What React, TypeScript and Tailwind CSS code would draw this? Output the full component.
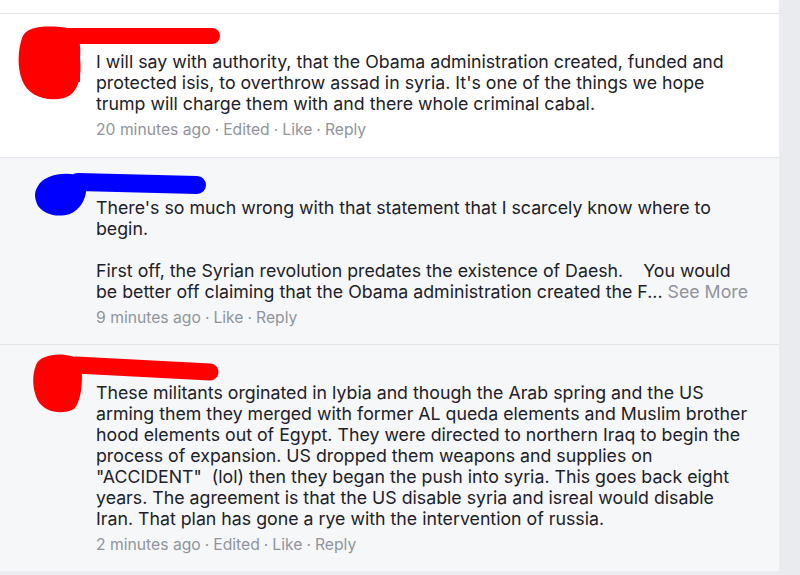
import React from "react";

const font = { fontFamily: "Inter, 'Noto Sans', sans-serif" };

function Meta({ parts }: { parts: string[] }) {
  return (
    <div className="mt-[5px] text-[15.7px] leading-[21px] text-[#90949c] whitespace-nowrap">
      {parts.map((p, i) => (
        <span key={i}>
          {i > 0 && <span className="mx-[4px]">·</span>}
          {p}
        </span>
      ))}
    </div>
  );
}

function Lines({ lines }: { lines: React.ReactNode[] }) {
  return (
    <div className="text-[17.75px] leading-[21px] text-[#1d2129] whitespace-pre">
      {lines.map((l, i) => (
        <div key={i} className="h-[21px]">
          {l}
        </div>
      ))}
    </div>
  );
}

export default function App() {
  return (
    <div className="w-[800px] h-[575px] bg-[#e9ebee] overflow-hidden flex" style={font}>
      <div className="w-[779px] flex flex-col">
        <div className="h-[14px] bg-white border-b border-[#e3e4e8]" />
        <div className="relative h-[144px] bg-white border-b border-[#e3e4e8] pl-[96px] pt-[37px]">
          <svg className="absolute left-0 top-0" width="240" height="110" viewBox="0 0 240 110">
            <rect x="77" y="34" width="3" height="34" fill="#44506a" />
            <path d="M22 24 C26 12 44 12 60 13 C76 13 82 24 80 44 C82 64 78 80 64 84 C46 88 28 82 22 66 C17 52 18 36 22 24 Z" fill="#ff0000" />
            <path d="M64 22 L212 22" stroke="#ff0000" strokeWidth="16" strokeLinecap="round" />
          </svg>
          <Lines
            lines={[
              "I will say with authority, that the Obama administration created, funded and",
              "protected isis, to overthrow assad in syria. It's one of the things we hope",
              "trump will charge them with and there whole criminal cabal.",
            ]}
          />
          <Meta parts={["20 minutes ago", "Edited", "Like", "Reply"]} />
        </div>
        <div className="relative h-[187px] bg-[#f6f7f9] border-b border-[#e3e4e8] pl-[96px] pt-[39px]">
          <svg className="absolute left-0 top-0" width="240" height="80" viewBox="0 0 240 80">
            <path d="M38 28 C44 16 70 12 84 20 C90 32 84 50 70 56 C56 60 44 56 38 48 C34 40 34 34 38 28 Z" fill="#0000ff" />
            <path d="M78 24 L197 27" stroke="#0000ff" strokeWidth="18" strokeLinecap="round" />
          </svg>
          <Lines
            lines={[
              "There's so much wrong with that statement that I scarcely know where to",
              "begin.",
              "",
              "First off, the Syrian revolution predates the existence of Daesh.    You would",
              <span>
                be better off claiming that the Obama administration created the F...{" "}
                <span className="text-[#90949c]">See More</span>
              </span>,
            ]}
          />
          <Meta parts={["9 minutes ago", "Like", "Reply"]} />
        </div>
        <div className="relative h-[226px] bg-[#f6f7f9] pl-[96px] pt-[37px]">
          <svg className="absolute left-0 top-0" width="240" height="80" viewBox="0 0 240 80">
            <path d="M36 20 C40 8 70 6 80 16 C84 30 82 56 74 64 C62 70 46 68 38 56 C32 44 32 30 36 20 Z" fill="#ff0000" />
            <path d="M76 20 L210 27" stroke="#ff0000" strokeWidth="17" strokeLinecap="round" />
          </svg>
          <Lines
            lines={[
              "These militants orginated in lybia and though the Arab spring and the US",
              "arming them they merged with former AL queda elements and Muslim brother",
              "hood elements out of Egypt. They were directed to northern Iraq to begin the",
              "process of expansion. US dropped them weapons and supplies on",
              "\"ACCIDENT\"  (lol) then they began the push into syria. This goes back eight",
              "years. The agreement is that the US disable syria and isreal would disable",
              "Iran. That plan has gone a rye with the intervention of russia.",
            ]}
          />
          <Meta parts={["2 minutes ago", "Edited", "Like", "Reply"]} />
        </div>
      </div>
    </div>
  );
}
